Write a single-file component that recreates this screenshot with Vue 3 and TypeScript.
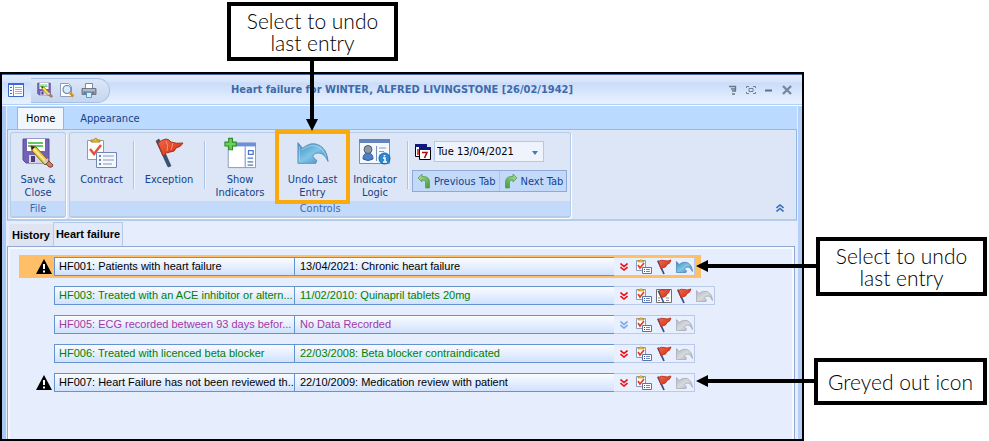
<script setup lang="ts">
import { ref } from 'vue'

type Tone = 'plain' | 'done' | 'missing'

interface Indicator {
  name: string
  entry: string
  tone: Tone
  warning: boolean
  selected: boolean
  chevron: 'red' | 'blue'
  extraFlag: boolean
  canUndo: boolean
}

const indicators: Indicator[] = [
  { name: 'HF001: Patients with heart failure', entry: '13/04/2021: Chronic heart failure', tone: 'plain', warning: true, selected: true, chevron: 'red', extraFlag: false, canUndo: true },
  { name: 'HF003: Treated with an ACE inhibitor or altern...', entry: '11/02/2010: Quinapril tablets 20mg', tone: 'done', warning: false, selected: false, chevron: 'red', extraFlag: true, canUndo: false },
  { name: 'HF005: ECG recorded between 93 days befor...', entry: 'No Data Recorded', tone: 'missing', warning: false, selected: false, chevron: 'blue', extraFlag: false, canUndo: false },
  { name: 'HF006: Treated with licenced beta blocker', entry: '22/03/2008: Beta blocker contraindicated', tone: 'done', warning: false, selected: false, chevron: 'red', extraFlag: false, canUndo: false },
  { name: 'HF007: Heart Failure has not been reviewed th...', entry: '22/10/2009: Medication review with patient', tone: 'plain', warning: true, selected: false, chevron: 'red', extraFlag: false, canUndo: false },
]

const date = ref('Tue 13/04/2021')
</script>

<template>
  <svg class="sprite" aria-hidden="true">
    <defs>
      <linearGradient id="blueFill" x1="0" y1="0" x2="1" y2="1">
        <stop offset="0" stop-color="#3f86c0" />
        <stop offset="0.5" stop-color="#7fc6e8" />
        <stop offset="1" stop-color="#3e7fb8" />
      </linearGradient>
      <linearGradient id="greyFill" x1="0" y1="0" x2="1" y2="1">
        <stop offset="0" stop-color="#b4b8c0" />
        <stop offset="0.5" stop-color="#d6d9de" />
        <stop offset="1" stop-color="#a4a8b0" />
      </linearGradient>
      <linearGradient id="redFill" x1="0" y1="0" x2="1" y2="1">
        <stop offset="0" stop-color="#f0684a" />
        <stop offset="1" stop-color="#d02c10" />
      </linearGradient>
      <linearGradient id="greenFill" x1="0" y1="0" x2="1" y2="1">
        <stop offset="0" stop-color="#b4e0a0" />
        <stop offset="1" stop-color="#3f9a3a" />
      </linearGradient>
    </defs>

    <symbol id="save" viewBox="0 0 32 32">
      <path d="M1 2h26v24H4l-3-3z" fill="#7460b4" stroke="#5b4a98" />
      <path d="M5 2h18v12H5z" fill="#fff" />
      <path d="M6 6h15M6 9h15" stroke="#35b335" stroke-width="1.5" />
      <path d="M7 18h14v8H7z" fill="#d4d6e6" />
      <path d="M9 19h4v6H9z" fill="#4b3e80" />
      <path d="M9 9l5 1 13 14-4 4L10 14z" fill="#f0c848" stroke="#806020" />
      <path d="M11 11l14 15" stroke="#fff0a0" stroke-width="1.5" />
      <path d="M9 9l4 1-3 3z" fill="#222" />
      <path d="M24 27l3-3 4 4q0 3-4 2z" fill="#d87868" stroke="#784840" />
      <path d="M22 26l4-4" stroke="#c8c8c8" stroke-width="2" />
    </symbol>

    <symbol id="clipboard" viewBox="0 0 32 32">
      <path d="M1.5 3.5h16v19h-16z" fill="#fff" stroke="#8c9cb8" />
      <path d="M5 5V3h3q1-3 3-1v1h3v2z" fill="#f0c040" stroke="#b08418" />
      <path d="M4 12l4 5 7-9" fill="none" stroke="#e6503c" stroke-width="2.5" />
      <path d="M10.5 15.5h20v15h-20z" fill="#f4f8ff" stroke="#7188b4" />
      <path d="M13 19h2M13 23h2M13 27h2" stroke="#4058a0" stroke-width="1.5" />
      <path d="M17 19h11M17 23h11M17 27h9" stroke="#8a98b8" stroke-width="1" />
    </symbol>

    <symbol id="smallclip" viewBox="0 0 16 16">
      <path d="M.5 1.5h9v10h-9z" fill="#fff" stroke="#8c9cb8" />
      <path d="M2 3V1.5h2Q5-.5 6 1.5h2V3z" fill="#f0c040" stroke="#a88418" stroke-width=".6" />
      <path d="M2 6l2 3 4-5" fill="none" stroke="#e6402c" stroke-width="1.8" />
      <path d="M6.5 8.5h9v6h-9z" fill="#fff" stroke="#5a74a8" />
      <path d="M8 10.5h1M8 12.5h1" stroke="#3048a0" />
      <path d="M10 10.5h4M10 12.5h4" stroke="#7084b0" />
    </symbol>

    <symbol id="flag" viewBox="0 0 32 32">
      <path d="M3 4l3-2 12 27-3 1z" fill="#3c5078" stroke="#283858" stroke-width=".6" />
      <path d="M5 6q3-3 8-4 3 0 5 3 5 2 12 1-2 4-7 5-1 4-6 4-4 0-7 4z" fill="url(#redFill)" stroke="#b03010" />
      <path d="M13 4q3 4 1 10M20 6l-2 7" stroke="#ff9470" fill="none" />
    </symbol>

    <symbol id="smallflag" viewBox="0 0 16 16">
      <path d="M1 2l1.800-.8 6 13.500-1.600.6z" fill="#34508c" />
      <path d="M2.500 2.500Q5 .5 8 1.500q3 1 7-.5-1 4-4 4.500-1 3-3 3T5 10z" fill="url(#redFill)" stroke="#b82810" stroke-width=".8" />
    </symbol>

    <symbol id="flagpage" viewBox="0 0 16 16">
      <path d="M.5 1.500h15v13H.5z" fill="#fff" stroke="#707070" />
      <path d="M10 10h3M10 12.500h3M2 10h2M2 12.500h2" stroke="#888" />
      <path d="M1.500 3l1.500-.5 5.500 12-1.500.5z" fill="#34508c" />
      <path d="M3 3q3-2 5-1 3 1 6-.5-1 4-3 4.500-1 3-3 3T5.500 10z" fill="url(#redFill)" stroke="#b82810" stroke-width=".8" />
    </symbol>

    <symbol id="show" viewBox="0 0 34 34">
      <path d="M4.500 6.500h29v26h-29z" fill="#fff" stroke="#8298c0" />
      <path d="M4 6h30v4H4z" fill="#6f8fdc" />
      <path d="M22.500 10v22" stroke="#6580b8" />
      <path d="M26 14.500h5v4h-5zM25 22.500h6M25 26.500h6M25 30h6" fill="none" stroke="#4c74d0" stroke-width="1.300" />
      <path d="M5 1.500h4v4h4v4H9v4H5v-4H1v-4h4z" fill="#6cd050" stroke="#2c8c28" stroke-width="1.200" />
    </symbol>

    <symbol id="undo" viewBox="0 0 34 24">
      <path d="M1 1l5 6Q14 0 22 3q10 4 11 18-4-9-10-9-6 0-6 4l4 4-1 3H1z" fill="url(#blueFill)" stroke="#5f8fb4" />
      <path d="M2.500 5v16M5 9q9-7 16-4 7 2 10 11" fill="none" stroke="#b4e4f8" opacity=".7" />
    </symbol>

    <symbol id="undoshape" viewBox="0 0 17 12">
      <path d="M.5.500l2.500 3Q7 .2 11 1.500q5 2 5.500 9Q14.500 6 12 6 8.500 6 8.500 8l2 2-.5 1.500H.5z" stroke-width=".8" />
    </symbol>

    <symbol id="logic" viewBox="0 0 32 28">
      <path d="M.5.500h30v24H.5z" fill="#f4f8ff" stroke="#7890b8" />
      <path d="M0 0h31v4H0z" fill="#6684bc" />
      <path d="M4 20q0-6 5-6t5 6q-5 3-10 0z" fill="#4c80c8" stroke="#345898" />
      <circle cx="9" cy="10.500" r="4" fill="#9098a4" stroke="#505c70" />
      <path d="M17.500 7v15" stroke="#7890b8" />
      <path d="M20 9h7M20 12.500h5M20 16h3" stroke="#8898b8" />
      <circle cx="25.500" cy="19.500" r="5.500" fill="#2c88d0" stroke="#1860a0" />
      <path d="M25.500 16v1.500M24 19h2v4m-2 0h4" stroke="#fff" stroke-width="1.500" fill="none" />
    </symbol>

    <symbol id="calendar" viewBox="0 0 16 16">
      <path d="M.5.500h11v12H.5z" fill="#fff" stroke="#000" />
      <path d="M0 0h12v3H0z" fill="#101880" />
      <path d="M3 5v6" stroke="#c01010" stroke-width="1.500" />
      <path d="M4.500 3.500h11v12h-11z" fill="#fff" stroke="#000" />
      <path d="M4 3h12v3H4z" fill="#101880" />
      <path d="M7 8.500h5L9.500 14" fill="none" stroke="#a01010" stroke-width="1.600" />
    </symbol>

    <symbol id="turn" viewBox="0 0 14 16">
      <path d="M1 5l4-4v2.500h2Q12.500 4 12.500 9v6h-4V9Q8.500 7 5 7v2z" fill="url(#greenFill)" stroke="#58a050" stroke-width=".8" />
    </symbol>

    <symbol id="menu" viewBox="0 0 16 16">
      <path d="M.5 1.500h15v13H.5z" fill="#fff" stroke="#3c68c8" />
      <path d="M0 1h16v2H0z" fill="#3c68d8" />
      <path d="M5.500 3v11" stroke="#6c90d8" />
      <path d="M2 5.500h2M2 8.500h2M2 11.500h2" stroke="#3c68c8" />
      <path d="M7 5.500h7M7 7.500h7M7 9.500h7M7 11.500h7" stroke="#90b0e0" />
    </symbol>

    <symbol id="preview" viewBox="0 0 16 16">
      <path d="M1.500 1.500h8l3 3v10h-11z" fill="#fff" stroke="#909cb8" />
      <circle cx="8" cy="7.500" r="4" fill="#d4ecff" stroke="#6884a8" stroke-width="1.200" />
      <path d="M11 11l3.500 3.500" stroke="#e09020" stroke-width="2.500" />
    </symbol>

    <symbol id="printer" viewBox="0 0 16 16">
      <path d="M4.500 1.500h7v6h-7z" fill="#fff" stroke="#8088a0" />
      <path d="M1 6.500h14v6H1z" fill="#9098a8" stroke="#606878" stroke-width=".8" />
      <path d="M2 8h12" stroke="#d4d8e0" />
      <path d="M3 11h10" stroke="#50586c" />
      <path d="M5.500 10.500h5v5h-5z" fill="#d8f0ff" stroke="#5898d0" />
    </symbol>

    <symbol id="chevrons" viewBox="0 0 8 8">
      <path d="M.5.500L4 3.500 7.500.5M.5 4L4 7l3.500-3" fill="none" stroke="currentColor" stroke-width="1.600" />
    </symbol>

    <symbol id="warning" viewBox="0 0 16 15">
      <path d="M8 0l8 15H0z" fill="#000" />
      <path d="M8 5v5M8 11.500v2" stroke="#fff" stroke-width="2" />
    </symbol>

    <symbol id="arrow" viewBox="0 0 12 12">
      <path d="M0 6l12-6v12z" fill="#000" />
    </symbol>
  </svg>

  <main class="page">
    <section class="window">
      <header class="titlebar">
        <div class="quick">
          <button class="icon-btn" aria-label="Menu"><svg class="i16"><use href="#menu" /></svg></button>
          <div class="pill">
            <button class="icon-btn" aria-label="Save"><svg class="i16"><use href="#save" /></svg></button>
            <button class="icon-btn" aria-label="Preview"><svg class="i16"><use href="#preview" /></svg></button>
            <button class="icon-btn" aria-label="Print"><svg class="i16"><use href="#printer" /></svg></button>
          </div>
        </div>
        <h1>Heart failure for WINTER, ALFRED LIVINGSTONE [26/02/1942]</h1>
        <div class="system">
          <button class="icon-btn" aria-label="Help"><svg class="i10" viewBox="0 0 10 10"><path d="M1 1.500h7M3 4h5M4 6h4M4 9h3M7.500 1v5" stroke="#687888" stroke-width="1.400" /></svg></button>
          <button class="icon-btn" aria-label="Full screen"><svg class="i10" viewBox="0 0 10 10"><path d="M.5 3V1.500H3M7 1.500h2.500V3M9.500 7v1.500H7M3 8.500H.5V7M3 3.500h4v3H3z" fill="none" stroke="#708094" /></svg></button>
          <button class="icon-btn" aria-label="Minimise"><svg class="i10" viewBox="0 0 10 10"><path d="M1 5.500h7" stroke="#60708c" stroke-width="2" /></svg></button>
          <button class="icon-btn" aria-label="Close"><svg class="i10" viewBox="0 0 10 10"><path d="M1 1l8 8M9 1L1 9" stroke="#7488a4" stroke-width="2.400" /></svg></button>
        </div>
      </header>

      <div class="frame">
        <nav class="ribbon-tabs">
          <button class="ribbon-tab active">Home</button>
          <button class="ribbon-tab">Appearance</button>
        </nav>

        <div class="ribbon">
          <section class="group">
            <div class="group-body">
              <button class="tool file"><svg class="i32"><use href="#save" /></svg><span>Save &amp;<br />Close</span></button>
            </div>
            <h2>File</h2>
          </section>
          <section class="group">
            <div class="group-body">
              <button class="tool contract"><svg class="i32"><use href="#clipboard" /></svg><span>Contract</span></button>
              <i class="rule"></i>
              <button class="tool exception"><svg class="i32"><use href="#flag" /></svg><span>Exception</span></button>
              <i class="rule"></i>
              <button class="tool show"><svg class="i32"><use href="#show" /></svg><span>Show<br />Indicators</span></button>
              <button class="tool undo"><svg class="i32"><use href="#undo" /></svg><span>Undo Last<br />Entry</span></button>
              <button class="tool logic"><svg class="i32"><use href="#logic" /></svg><span>Indicator<br />Logic</span></button>
              <i class="rule"></i>
              <div class="dates">
                <label class="date-row">
                  <svg class="i16"><use href="#calendar" /></svg>
                  <span class="select">
                    <select v-model="date" aria-label="Date"><option>Tue 13/04/2021</option></select>
                    <svg class="caret" viewBox="0 0 6 4"><path d="M0 0h6L3 4z" fill="#4478b8" /></svg>
                  </span>
                </label>
                <div class="pager">
                  <button><svg class="turn"><use href="#turn" /></svg>Previous Tab</button>
                  <button><svg class="turn flip"><use href="#turn" /></svg>Next Tab</button>
                </div>
              </div>
            </div>
            <h2>Controls</h2>
          </section>
          <button class="icon-btn collapse" aria-label="Collapse ribbon"><svg class="i8 up"><use href="#chevrons" /></svg></button>
        </div>

        <nav class="page-tabs">
          <button class="page-tab">History</button>
          <button class="page-tab active">Heart failure</button>
        </nav>

        <div class="panel">
          <table>
            <tbody>
              <tr v-for="row in indicators" :key="row.name" :class="[row.tone, { selected: row.selected }]">
                <td class="alert"><svg v-if="row.warning" class="warning" role="img" aria-label="Warning"><use href="#warning" /></svg></td>
                <td class="name">{{ row.name }}</td>
                <td class="entry">{{ row.entry }}</td>
                <td class="actions">
                  <button class="icon-btn" :class="row.chevron" aria-label="Expand"><svg class="i8"><use href="#chevrons" /></svg></button>
                  <button class="icon-btn" aria-label="Contract"><svg class="i16"><use href="#smallclip" /></svg></button>
                  <button v-if="row.extraFlag" class="icon-btn" aria-label="Recorded exception"><svg class="i16"><use href="#flagpage" /></svg></button>
                  <button class="icon-btn" aria-label="Exception"><svg class="i16"><use href="#smallflag" /></svg></button>
                  <button class="icon-btn" :disabled="!row.canUndo" aria-label="Undo last entry"><svg class="mini-undo" :class="{ live: row.canUndo }"><use href="#undoshape" /></svg></button>
                </td>
              </tr>
            </tbody>
          </table>
        </div>
      </div>
    </section>

    <aside class="callout top">Select to undo<br />last entry</aside>
    <aside class="callout middle">Select to undo<br />last entry</aside>
    <aside class="callout bottom">Greyed out icon</aside>
    <div class="pointer down"><svg><use href="#arrow" /></svg></div>
    <div class="pointer left first"><svg><use href="#arrow" /></svg></div>
    <div class="pointer left second"><svg><use href="#arrow" /></svg></div>
  </main>
</template>

<style>
body {
  background: #fff;
}
</style>

<style scoped>
* {
  box-sizing: border-box;
}

.sprite {
  position: absolute;
  width: 0;
  height: 0;
}

svg {
  display: block;
  flex: none;
}

button,
select {
  margin: 0;
  padding: 0;
  border: 0;
  background: none;
  color: inherit;
  font: inherit;
}

.page {
  position: relative;
  display: flex;
  min-height: 100vh;
  padding: 72px 185px 0 0;
  font: 11px/13px "DejaVu Sans Condensed", "DejaVu Sans", sans-serif;
  color: #15428b;
}

.window {
  flex: 1;
  min-width: 0;
  display: flex;
  flex-direction: column;
  border: 2px solid #000;
  background: #e6eefd;
}

.titlebar {
  display: grid;
  grid-template-columns: 1fr auto 1fr;
  align-items: center;
  height: 32px;
  border-top: 1px solid #47699c;
  border-bottom: 1px solid #fff;
  box-shadow: inset 0 -1px #b0d2fa;
  background: linear-gradient(#e2ecfd 0, #d5e3fa 7px, #c9dcf9 8px, #e3edfe 24px, #e8f1ff 30px);
}

.titlebar h1 {
  margin: 0;
  font: bold 11px/16px "DejaVu Sans Condensed", "DejaVu Sans", sans-serif;
  color: #3e6aaa;
  white-space: nowrap;
}

.quick {
  display: flex;
  align-items: center;
  gap: 7px;
  padding-left: 6px;
}

.pill {
  display: flex;
  align-items: center;
  gap: 6px;
  height: 25px;
  padding: 0 12px 0 6px;
  border: 1px solid #a9c0e4;
  border-left: 0;
  border-radius: 0 13px 13px 0;
  background: linear-gradient(#dbe6f7, #c5d6f0);
}

.system {
  display: flex;
  justify-content: flex-end;
  gap: 8px;
  padding-right: 10px;
}

.icon-btn {
  display: flex;
  align-items: center;
  justify-content: center;
}

.i8 { width: 8px; height: 8px; }
.i10 { width: 10px; height: 10px; }
.i16 { width: 16px; height: 16px; }
.i32 { width: 32px; height: 32px; }

.up {
  transform: scaleY(-1);
}

.frame {
  flex: 1;
  display: flex;
  flex-direction: column;
  padding: 0 1px;
  border-left: 4px solid #a9c8f3;
  border-right: 4px solid #b5d0f8;
}

.ribbon-tabs {
  display: flex;
  height: 23px;
  padding: 1px 0 0 10px;
  background: #bbdaff;
}

.ribbon-tab {
  padding: 0 16px;
  color: #15428b;
}

.ribbon-tab.active {
  padding: 0 8px;
  border: 1px solid #8fb8ea;
  border-bottom: 0;
  background: #f2f6fd;
  color: #000;
}

.ribbon {
  display: flex;
  gap: 3px;
  padding: 2px;
  height: 92px;
  border: 1px solid #93b7ea;
  border-bottom: 2px solid #b4cdeb;
  background: #dce6f6;
}

.group {
  display: flex;
  flex-direction: column;
  height: 86px;
  border: 1px solid #b4cce8;
  border-bottom-width: 2px;
  border-radius: 3px;
  box-shadow: 1px 1px #fff;
}

.group-body {
  flex: 1;
  display: flex;
}

.group h2 {
  margin: 0;
  height: 15px;
  background: #c4dafa;
  font: inherit;
  line-height: 15px;
  text-align: center;
  color: #3e6aaa;
}

.tool {
  position: relative;
  display: flex;
  flex-direction: column;
  align-items: center;
  gap: 4px;
  padding-top: 4px;
  white-space: nowrap;
}

.tool.file { width: 54px; }
.tool.contract { width: 63px; }
.tool.exception { width: 70px; }
.tool.show { width: 70px; }
.tool.undo { width: 75px; }
.tool.logic { width: 50px; }

.tool.undo::after {
  content: "";
  position: absolute;
  inset: -3px 0;
  border: 4px solid #faaa0c;
}

.rule {
  width: 1px;
  margin: 8px 0 12px;
  background: #a9c4e8;
  box-shadow: 1px 0 #f0f6ff;
}

.tool.logic + .rule {
  margin-left: 7px;
}

.dates {
  padding: 8px 3px 0 4px;
  display: flex;
  flex-direction: column;
  gap: 8px;
}

.date-row {
  display: flex;
  align-items: center;
  gap: 3px;
  padding-left: 3px;
}

.select {
  position: relative;
  width: 110px;
}

.select select {
  display: block;
  width: 100%;
  height: 21px;
  padding: 0 2px;
  border: 1px solid #b3c9e8;
  background: #eef3fe;
  color: #000;
  appearance: none;
}

.caret {
  position: absolute;
  right: 6px;
  top: 10px;
  width: 6px;
  height: 4px;
}

.pager {
  display: flex;
  height: 22px;
  border: 1px solid #8ea9d6;
  background: #c3d9fa;
}

.pager button {
  display: flex;
  align-items: center;
  gap: 3px;
  padding: 0 3px 0 4px;
  white-space: nowrap;
}

.pager button + button {
  border-left: 1px solid #abc6ec;
}

.turn {
  width: 14px;
  height: 16px;
}

.flip {
  transform: scaleX(-1);
}

.collapse {
  align-self: flex-end;
  margin: 0 10px 5px auto;
  color: #3c70b8;
}

.page-tabs {
  display: flex;
  align-items: flex-end;
  height: 25px;
  padding-left: 2px;
  font: bold 11px/13px "Liberation Sans", Arial, sans-serif;
  color: #000;
}

.page-tab {
  height: 22px;
  padding: 0 3px;
  background: #e0e4f0;
}

.page-tab.active {
  height: 24px;
  padding: 0 2px;
  border: 1px solid #b4cae8;
  border-bottom: 0;
  background: #e0eafa;
}

.panel {
  flex: 1;
  padding: 8px 0 8px 11px;
  margin-right: 2px;
  border: 1px solid #92a8d4;
  border-bottom: 0;
  box-shadow: inset 0 2px #f6f9ff, inset 2px 0 #f6f9ff, inset -2px 0 #f6f9ff;
}

table,
tbody {
  display: flex;
  flex-direction: column;
  align-items: flex-start;
  gap: 6px;
}

tr {
  display: flex;
  height: 23px;
  padding: 2px 6px 2px 0;
  font: 11px/17px "Liberation Sans", Arial, sans-serif;
}

td {
  padding: 0;
}

tr.plain { color: #000; }
tr.done { color: #008000; }
tr.missing { color: #a338a3; }
tr.selected { background: #ffbf69; }

.alert {
  flex: none;
  width: 35px;
  padding: 2px 0 0 17px;
}

.warning {
  width: 16px;
  height: 15px;
}

.name,
.entry {
  white-space: nowrap;
  border: 1px solid #6493cf;
  background: linear-gradient(#fafcff, #d0e2fd);
}

.name {
  width: 240px;
  padding-left: 4px;
  border-right: 0;
}

.entry {
  width: 320px;
  padding-left: 5px;
  border-right: 0;
}

.actions {
  flex: none;
  display: flex;
  border: 1px solid #b9c9ea;
  border-left: 0;
  background: #e8effe;
}

.actions .icon-btn {
  width: 20px;
}

.red { color: #f01010; }
.blue { color: #78a8ec; }

.mini-undo {
  width: 17px;
  height: 12px;
  fill: url(#greyFill);
  stroke: #a8acb4;
}

.mini-undo.live {
  fill: url(#blueFill);
  stroke: #4c88bc;
}

.callout {
  position: absolute;
  display: flex;
  align-items: center;
  justify-content: center;
  border: 4px solid #000;
  background: #fff;
  color: #000;
  font: 300 21px/22px Lato, sans-serif;
  text-align: center;
  white-space: nowrap;
}

.top { left: 227px; top: 2px; width: 171px; height: 59px; }
.middle { right: 2px; top: 237px; width: 171px; height: 59px; }
.bottom { right: 2px; top: 358px; width: 173px; height: 47px; }

.pointer {
  position: absolute;
  background: #000;
}

.pointer svg {
  position: absolute;
  width: 12px;
  height: 12px;
}

.pointer.down { left: 310px; top: 60px; width: 4px; height: 60px; }
.pointer.down svg { left: -4px; bottom: -11px; transform: rotate(-90deg); }
.pointer.left { right: 172px; width: 111px; height: 4px; }
.pointer.left svg { left: -10px; top: -4px; }
.pointer.first { top: 264px; }
.pointer.second { top: 379px; }
</style>
